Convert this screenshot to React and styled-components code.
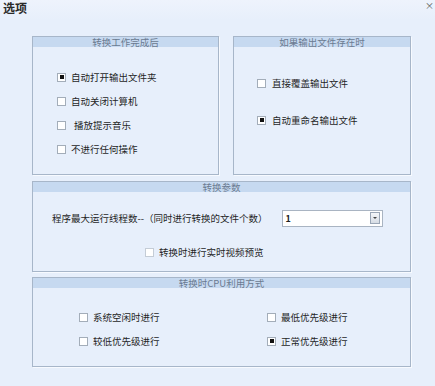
import React from 'react';
import styled, { createGlobalStyle } from 'styled-components';

const Global = createGlobalStyle`
  html, body { margin: 0; padding: 0; background: #e7effb; }
  body { font-family: "Noto Sans CJK SC", "Noto Sans", sans-serif; }
`

const Window = styled.div`
  width: 435px;
  height: 386px;
  background: #e7effb;
  display: flex;
  flex-direction: column;
  overflow: hidden;
`

const TitleBar = styled.div`
  height: 36px;
  display: flex;
  justify-content: space-between;
  align-items: flex-start;
  background: linear-gradient(#eef3fc, #e7effb 20px);
`

const Title = styled.div`
  font-size: 12px;
  line-height: 16px;
  font-weight: bold;
  color: #2a2a2a;
  padding-left: 3px;
`

const Close = styled.div`
  font-size: 9px;
  line-height: 12px;
  color: #555;
  padding: 0 1px 0 0;
`

const Body = styled.div`
  padding-left: 32px;
  width: 379px;
  display: flex;
  flex-direction: column;
`

const TopRow = styled.div`
  display: flex;
  gap: 14px;
`

const Group = styled.div`
  box-sizing: border-box;
  width: ${p => p.w || 379}px;
  height: ${p => p.h}px;
  margin-top: ${p => p.mt || 0}px;
  border: 1px solid #a7b6c9;
  box-shadow: 1px 1px 0 #f7faff;
  display: flex;
  flex-direction: column;
`

const Head = styled.div`
  height: 10px;
  background: #c6d9f0;
  font-size: 9.5px;
  line-height: 11px;
  color: #6b7b91;
  text-align: center;
  white-space: nowrap;
`

const List = styled.div`
  display: flex;
  flex-direction: column;
  padding: ${p => p.pt}px 0 0 ${p => p.pl}px;
  gap: ${p => p.gap}px;
`

const Row = styled.label`
  display: flex;
  align-items: center;
  height: 24px;
  gap: ${p => p.g || 5}px;
  font-size: 9.5px;
  color: #1f1f1f;
  white-space: nowrap;
  padding-left: ${p => p.pl || 0}px;
  margin-top: ${p => p.mt || 0}px;
`

const Box = styled.span`
  box-sizing: border-box;
  width: 9px;
  height: 9px;
  flex: none;
  background: #fff;
  border: 1px solid ${p => (p.disabled ? '#c4ccd6' : '#a3adb9')};
  display: flex;
  align-items: center;
  justify-content: center;
  &::after {
    content: '';
    width: 4px;
    height: 4px;
    background: ${p => (p.checked ? '#111' : 'transparent')};
  }
`

const ParamRow = styled.div`
  display: flex;
  align-items: center;
  height: 24px;
  padding: 14px 0 0 19px;
  font-size: 9.5px;
  color: #1f1f1f;
  white-space: nowrap;
`

const Select = styled.div`
  box-sizing: border-box;
  margin-left: 14px;
  width: 101px;
  height: 17px;
  background: #fff;
  border: 1px solid #a9b4c2;
  display: flex;
  align-items: center;
  justify-content: space-between;
  padding: 0 2px 0 3px;
  font-size: 9px;
  font-weight: bold;
  color: #222;
`

const Drop = styled.span`
  box-sizing: border-box;
  width: 10px;
  height: 12px;
  border: 1px solid #9aa6b6;
  background: linear-gradient(#f4f6f9, #d6dce4);
  display: flex;
  align-items: center;
  justify-content: center;
  &::after {
    content: '';
    border-left: 2px solid transparent;
    border-right: 2px solid transparent;
    border-top: 2px solid #444;
  }
`

const Grid = styled.div`
  display: grid;
  grid-template-columns: 188px 1fr;
  padding: 17px 0 0 46px;
`

const Check = ({ checked, disabled, children, g, pl, mt }) => (
  <Row g={g} pl={pl} mt={mt}>
    <Box checked={checked} disabled={disabled} />
    <span>{children}</span>
  </Row>
)

export default function App() {
  return (
    <Window>
      <Global />
      <TitleBar>
        <Title>选项</Title>
        <Close>×</Close>
      </TitleBar>
      <Body>
        <TopRow>
          <Group w={187} h={139}>
            <Head>转换工作完成后</Head>
            <List pt={18} pl={24} gap={0}>
              <Check checked>自动打开输出文件夹</Check>
              <Check>自动关闭计算机</Check>
              <Check g={8}>播放提示音乐</Check>
              <Check>不进行任何操作</Check>
            </List>
          </Group>
          <Group w={178} h={139}>
            <Head>如果输出文件存在时</Head>
            <List pt={24} pl={23} gap={13}>
              <Check g={6}>直接覆盖输出文件</Check>
              <Check g={6} checked>自动重命名输出文件</Check>
            </List>
          </Group>
        </TopRow>
        <Group h={91} mt={6}>
          <Head>转换参数</Head>
          <ParamRow>
            程序最大运行线程数--（同时进行转换的文件个数）
            <Select>
              <span>1</span>
              <Drop />
            </Select>
          </ParamRow>
          <Check disabled pl={112} mt={10}>转换时进行实时视频预览</Check>
        </Group>
        <Group h={90} mt={5}>
          <Head>转换时CPU利用方式</Head>
          <Grid>
            <Check>系统空闲时进行</Check>
            <Check>最低优先级进行</Check>
            <Check>较低优先级进行</Check>
            <Check checked>正常优先级进行</Check>
          </Grid>
        </Group>
      </Body>
    </Window>
  )
}
